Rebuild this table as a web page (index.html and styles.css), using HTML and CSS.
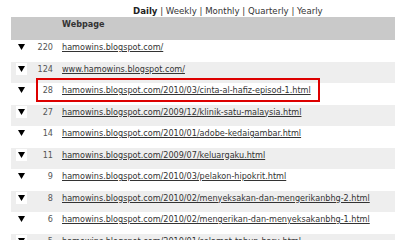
FILE: index.html
```html
<!DOCTYPE html>
<html>
<head>
<meta charset="utf-8">
<title>Webpage stats</title>
<link rel="stylesheet" href="styles.css">
</head>
<body>
<div class="page">
  <div class="nav"><b>Daily</b> | <a href="#">Weekly</a> | <a href="#">Monthly</a> | <a href="#">Quarterly</a> | <a href="#">Yearly</a></div>
  <table class="stats">
    <thead>
      <tr><th class="c-tri"></th><th class="c-num"></th><th class="c-url">Webpage</th></tr>
    </thead>
    <tbody>
      <tr><td class="c-tri"><span class="tri"><svg width="7" height="6" viewBox="0 0 7 6"><path d="M0 0H7L3.5 6Z"/></svg></span></td><td class="c-num">220</td><td class="c-url"><a href="#">hamowins.blogspot.com/</a></td></tr>
      <tr><td class="c-tri"><span class="tri"><svg width="7" height="6" viewBox="0 0 7 6"><path d="M0 0H7L3.5 6Z"/></svg></span></td><td class="c-num">124</td><td class="c-url"><a href="#">www.hamowins.blogspot.com/</a></td></tr>
      <tr><td class="c-tri"><span class="tri"><svg width="7" height="6" viewBox="0 0 7 6"><path d="M0 0H7L3.5 6Z"/></svg></span></td><td class="c-num">28</td><td class="c-url"><a href="#">hamowins.blogspot.com/2010/03/cinta-al-hafiz-episod-1.html</a></td></tr>
      <tr><td class="c-tri"><span class="tri"><svg width="7" height="6" viewBox="0 0 7 6"><path d="M0 0H7L3.5 6Z"/></svg></span></td><td class="c-num">27</td><td class="c-url"><a href="#">hamowins.blogspot.com/2009/12/klinik-satu-malaysia.html</a></td></tr>
      <tr><td class="c-tri"><span class="tri"><svg width="7" height="6" viewBox="0 0 7 6"><path d="M0 0H7L3.5 6Z"/></svg></span></td><td class="c-num">14</td><td class="c-url"><a href="#">hamowins.blogspot.com/2010/01/adobe-kedaigambar.html</a></td></tr>
      <tr><td class="c-tri"><span class="tri"><svg width="7" height="6" viewBox="0 0 7 6"><path d="M0 0H7L3.5 6Z"/></svg></span></td><td class="c-num">11</td><td class="c-url"><a href="#">hamowins.blogspot.com/2009/07/keluargaku.html</a></td></tr>
      <tr><td class="c-tri"><span class="tri"><svg width="7" height="6" viewBox="0 0 7 6"><path d="M0 0H7L3.5 6Z"/></svg></span></td><td class="c-num">9</td><td class="c-url"><a href="#">hamowins.blogspot.com/2010/03/pelakon-hipokrit.html</a></td></tr>
      <tr><td class="c-tri"><span class="tri"><svg width="7" height="6" viewBox="0 0 7 6"><path d="M0 0H7L3.5 6Z"/></svg></span></td><td class="c-num">8</td><td class="c-url"><a href="#">hamowins.blogspot.com/2010/02/menyeksakan-dan-mengerikanbhg-2.html</a></td></tr>
      <tr><td class="c-tri"><span class="tri"><svg width="7" height="6" viewBox="0 0 7 6"><path d="M0 0H7L3.5 6Z"/></svg></span></td><td class="c-num">6</td><td class="c-url"><a href="#">hamowins.blogspot.com/2010/02/mengerikan-dan-menyeksakanbhg-1.html</a></td></tr>
      <tr><td class="c-tri"><span class="tri"><svg width="7" height="6" viewBox="0 0 7 6"><path d="M0 0H7L3.5 6Z"/></svg></span></td><td class="c-num">5</td><td class="c-url"><a href="#">hamowins.blogspot.com/2010/01/selamat-tahun-baru.html</a></td></tr>
    </tbody>
  </table>
  <div class="highlight"></div>
</div>
</body>
</html>
```

FILE: styles.css
```css
html, body {
  margin: 0;
  padding: 0;
  background: #ffffff;
  overflow: hidden;
}

body {
  font-family: "DejaVu Sans", Verdana, sans-serif;
  font-size: 8.1px;
  line-height: 10px;
  color: #333333;
}

.page {
  position: relative;
  padding: 0 5px 0 11px;
}

.nav {
  box-sizing: border-box;
  height: 17px;
  padding: 6px 0 0 122px;
  font-size: 8.6px;
  color: #333333;
}

.nav b {
  color: #222222;
}

.nav a {
  color: #333333;
  text-decoration: none;
}

.stats {
  width: 384px;
  border-collapse: collapse;
  border-spacing: 0;
  table-layout: fixed;
}

.stats th {
  background: #c9c9c9;
  height: 23px;
  box-sizing: border-box;
  padding: 2px 0 0 0;
  vertical-align: top;
  text-align: left;
  font-weight: bold;
  color: #333333;
}

.stats td {
  height: 21.5px;
  box-sizing: border-box;
  padding: 2px 0 0 0;
  vertical-align: top;
  white-space: nowrap;
  overflow: hidden;
}

.stats tbody tr:nth-child(even) td {
  background: #eeeeee;
}

.c-tri {
  width: 21px;
}

.c-num {
  width: 21px;
  text-align: right;
  color: #555555;
}

.stats th.c-url,
.stats td.c-url {
  padding-left: 9px;
}

.c-url a {
  color: #333333;
  text-decoration: underline;
}

.tri {
  display: inline-block;
  margin: -1px 0 0 5px;
  width: 11px;
  height: 12px;
  background: #ffffff;
  vertical-align: top;
  text-align: center;
}

.tri svg {
  display: block;
  margin: 3px auto 0;
  fill: #000000;
}

.highlight {
  position: absolute;
  left: 36px;
  top: 78px;
  width: 280px;
  height: 20px;
  border: 2px solid #dd0000;
}
```
